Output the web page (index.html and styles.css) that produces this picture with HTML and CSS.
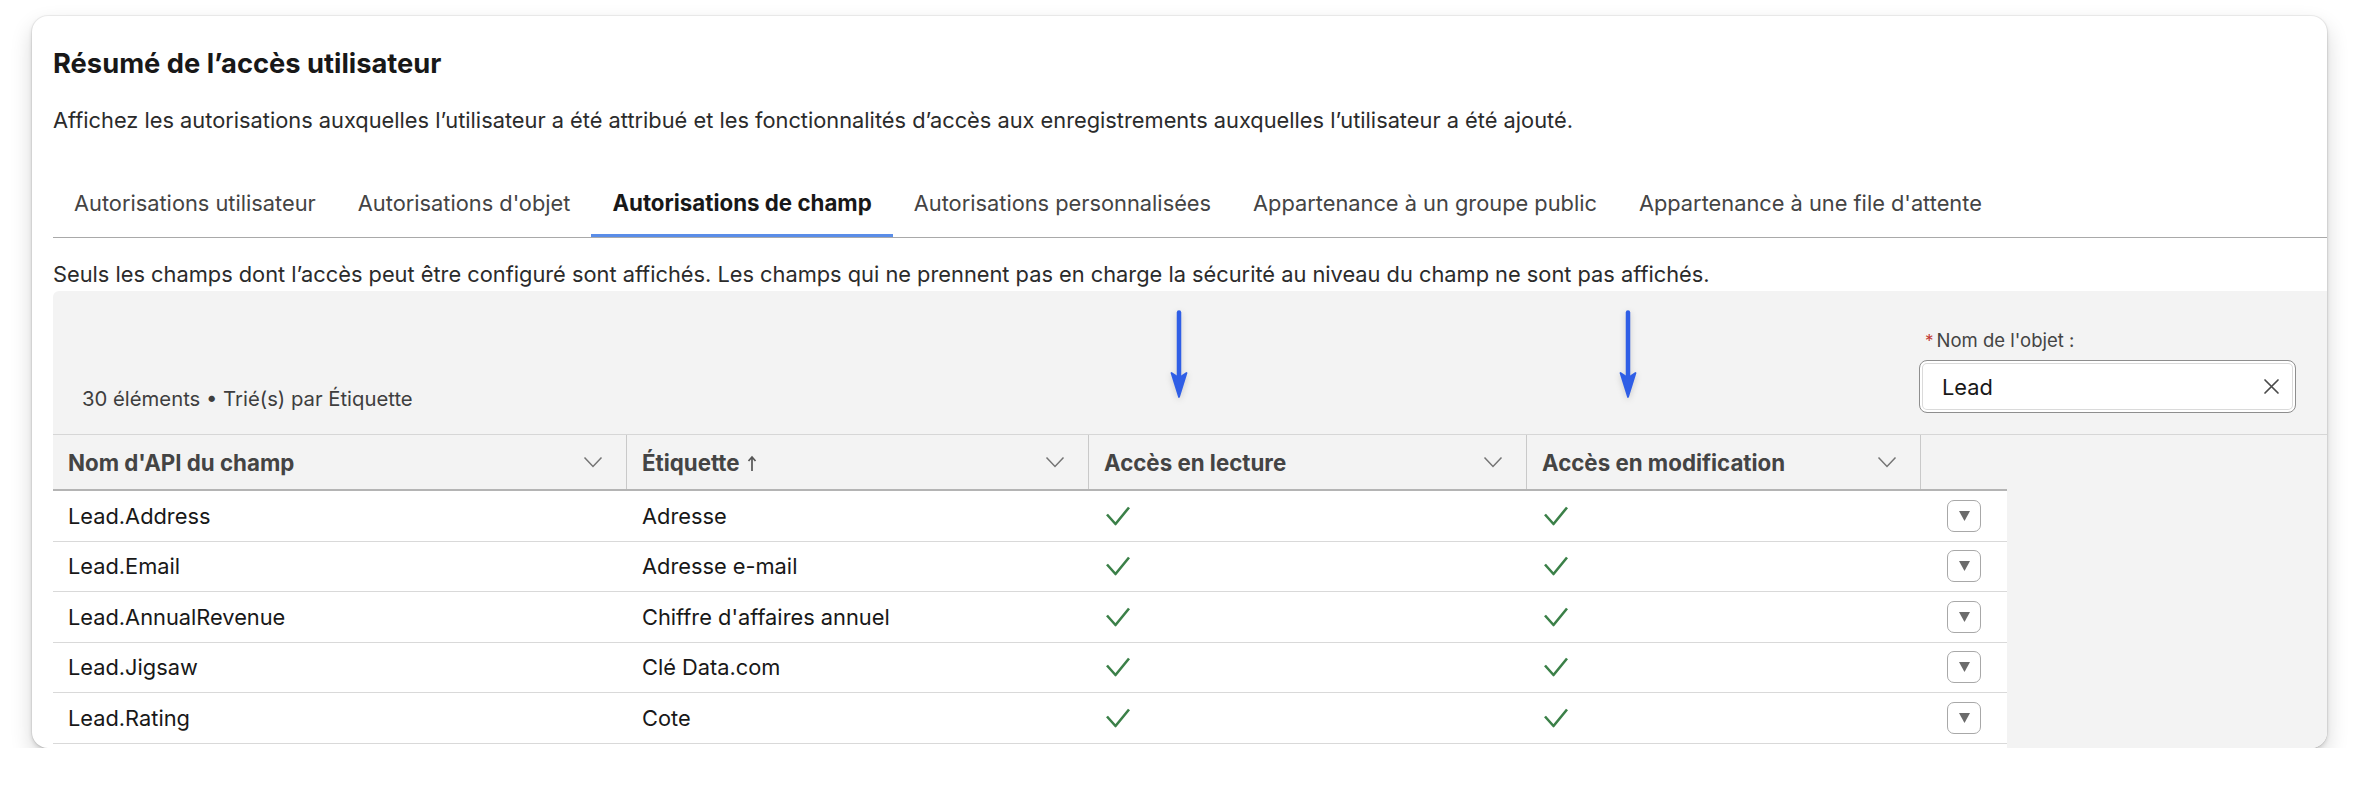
FILE: index.html
```html
<!DOCTYPE html>
<html lang="fr">
<head>
<meta charset="utf-8">
<title>Résumé de l’accès utilisateur</title>
<link rel="stylesheet" href="styles.css">
</head>
<body>
<section class="card">
  <h1 class="title">Résumé de l’accès utilisateur</h1>
  <p class="desc">Affichez les autorisations auxquelles l’utilisateur a été attribué et les fonctionnalités d’accès aux enregistrements auxquelles l’utilisateur a été ajouté.</p>
  <nav class="tabs">
    <a class="tab">Autorisations utilisateur</a>
    <a class="tab">Autorisations d'objet</a>
    <a class="tab active">Autorisations de champ</a>
    <a class="tab">Autorisations personnalisées</a>
    <a class="tab">Appartenance à un groupe public</a>
    <a class="tab">Appartenance à une file d'attente</a>
  </nav>
  <p class="note">Seuls les champs dont l’accès peut être configuré sont affichés. Les champs qui ne prennent pas en charge la sécurité au niveau du champ ne sont pas affichés.</p>

  <div class="datatable">
    <div class="toolbar">
      <div class="count">30 éléments • Trié(s) par Étiquette</div>
      <div class="field">
        <label class="field-label"><abbr class="req">*</abbr>Nom de l'objet :</label>
        <div class="input">
          <span class="input-value">Lead</span>
          <svg class="clear" width="17" height="17" viewBox="0 0 17 17"><path d="M2 2 L15 15 M15 2 L2 15" stroke="#4a4a4a" stroke-width="1.7" stroke-linecap="round"/></svg>
        </div>
      </div>
    </div>

    <div class="thead">
      <div class="grid hrow">
        <div class="th"><span>Nom d'API du champ</span><svg class="chev" width="20" height="12" viewBox="0 0 20 12"><polyline points="1.5,1.5 10,10.5 18.5,1.5" fill="none" stroke="#747474" stroke-width="1.5"/></svg></div>
        <div class="th"><span>Étiquette<svg class="sort" width="10" height="17" viewBox="0 0 10 17"><path d="M5 16 V2.5 M1.5 6 L5 2 L8.5 6" fill="none" stroke="#555" stroke-width="1.7"/></svg></span><svg class="chev" width="20" height="12" viewBox="0 0 20 12"><polyline points="1.5,1.5 10,10.5 18.5,1.5" fill="none" stroke="#747474" stroke-width="1.5"/></svg></div>
        <div class="th"><span>Accès en lecture</span><svg class="chev" width="20" height="12" viewBox="0 0 20 12"><polyline points="1.5,1.5 10,10.5 18.5,1.5" fill="none" stroke="#747474" stroke-width="1.5"/></svg></div>
        <div class="th"><span>Accès en modification</span><svg class="chev" width="20" height="12" viewBox="0 0 20 12"><polyline points="1.5,1.5 10,10.5 18.5,1.5" fill="none" stroke="#747474" stroke-width="1.5"/></svg></div>
        <div class="th th-last"></div>
      </div>
    </div>

    <div class="tbody">
      <div class="grid row">
        <div class="td">Lead.Address</div><div class="td">Adresse</div>
        <div class="td check"><svg width="26" height="20" viewBox="0 0 26 20"><path d="M2 8.5 L10.5 18 L24 1.5" fill="none" stroke="#3b8048" stroke-width="2.6" stroke-linejoin="round"/></svg></div>
        <div class="td check"><svg width="26" height="20" viewBox="0 0 26 20"><path d="M2 8.5 L10.5 18 L24 1.5" fill="none" stroke="#3b8048" stroke-width="2.6" stroke-linejoin="round"/></svg></div>
        <div class="td act"><button class="menu"><svg width="11" height="10" viewBox="0 0 11 10"><polygon points="0,0 11,0 5.5,10" fill="#6b6b6b"/></svg></button></div>
      </div>
      <div class="grid row">
        <div class="td">Lead.Email</div><div class="td">Adresse e-mail</div>
        <div class="td check"><svg width="26" height="20" viewBox="0 0 26 20"><path d="M2 8.5 L10.5 18 L24 1.5" fill="none" stroke="#3b8048" stroke-width="2.6" stroke-linejoin="round"/></svg></div>
        <div class="td check"><svg width="26" height="20" viewBox="0 0 26 20"><path d="M2 8.5 L10.5 18 L24 1.5" fill="none" stroke="#3b8048" stroke-width="2.6" stroke-linejoin="round"/></svg></div>
        <div class="td act"><button class="menu"><svg width="11" height="10" viewBox="0 0 11 10"><polygon points="0,0 11,0 5.5,10" fill="#6b6b6b"/></svg></button></div>
      </div>
      <div class="grid row">
        <div class="td">Lead.AnnualRevenue</div><div class="td">Chiffre d'affaires annuel</div>
        <div class="td check"><svg width="26" height="20" viewBox="0 0 26 20"><path d="M2 8.5 L10.5 18 L24 1.5" fill="none" stroke="#3b8048" stroke-width="2.6" stroke-linejoin="round"/></svg></div>
        <div class="td check"><svg width="26" height="20" viewBox="0 0 26 20"><path d="M2 8.5 L10.5 18 L24 1.5" fill="none" stroke="#3b8048" stroke-width="2.6" stroke-linejoin="round"/></svg></div>
        <div class="td act"><button class="menu"><svg width="11" height="10" viewBox="0 0 11 10"><polygon points="0,0 11,0 5.5,10" fill="#6b6b6b"/></svg></button></div>
      </div>
      <div class="grid row">
        <div class="td">Lead.Jigsaw</div><div class="td">Clé Data.com</div>
        <div class="td check"><svg width="26" height="20" viewBox="0 0 26 20"><path d="M2 8.5 L10.5 18 L24 1.5" fill="none" stroke="#3b8048" stroke-width="2.6" stroke-linejoin="round"/></svg></div>
        <div class="td check"><svg width="26" height="20" viewBox="0 0 26 20"><path d="M2 8.5 L10.5 18 L24 1.5" fill="none" stroke="#3b8048" stroke-width="2.6" stroke-linejoin="round"/></svg></div>
        <div class="td act"><button class="menu"><svg width="11" height="10" viewBox="0 0 11 10"><polygon points="0,0 11,0 5.5,10" fill="#6b6b6b"/></svg></button></div>
      </div>
      <div class="grid row">
        <div class="td">Lead.Rating</div><div class="td">Cote</div>
        <div class="td check"><svg width="26" height="20" viewBox="0 0 26 20"><path d="M2 8.5 L10.5 18 L24 1.5" fill="none" stroke="#3b8048" stroke-width="2.6" stroke-linejoin="round"/></svg></div>
        <div class="td check"><svg width="26" height="20" viewBox="0 0 26 20"><path d="M2 8.5 L10.5 18 L24 1.5" fill="none" stroke="#3b8048" stroke-width="2.6" stroke-linejoin="round"/></svg></div>
        <div class="td act"><button class="menu"><svg width="11" height="10" viewBox="0 0 11 10"><polygon points="0,0 11,0 5.5,10" fill="#6b6b6b"/></svg></button></div>
      </div>
    </div>

    <svg class="arrow arrow-read" width="20" height="90" viewBox="0 0 20 90"><path d="M10 2.5 V74" stroke="#2f5ee6" stroke-width="4.5" stroke-linecap="round"/><path d="M2.5 63 L10 87 L17.5 63 L10 68 Z" fill="#2f5ee6" stroke="#2f5ee6" stroke-width="1.8" stroke-linejoin="round"/></svg>
    <svg class="arrow arrow-edit" width="20" height="90" viewBox="0 0 20 90"><path d="M10 2.5 V74" stroke="#2f5ee6" stroke-width="4.5" stroke-linecap="round"/><path d="M2.5 63 L10 87 L17.5 63 L10 68 Z" fill="#2f5ee6" stroke="#2f5ee6" stroke-width="1.8" stroke-linejoin="round"/></svg>
  </div>
</section>
</body>
</html>
```
FILE: styles.css
```css
* { box-sizing: border-box; }

body {
  margin: 0;
  background: #ffffff;
  font-family: "Inter", "Noto Sans", sans-serif;
  color: #181818;
}

.card {
  margin: 16px 0 0 32px;
  width: 2295px;
  height: 732px;
  padding: 31px 0 0 21px;
  background: #ffffff;
  border-radius: 16px;
  overflow: hidden;
  box-shadow: 0 10px 22px rgba(0, 0, 0, 0.16), 0 2px 4px rgba(0, 0, 0, 0.14), 0 0 0 1px rgba(0, 0, 0, 0.05);
}

.title {
  margin: 0;
  font-size: 27.3px;
  line-height: 34px;
  font-weight: 700;
  color: #181818;
}

.desc {
  margin: 25px 0 0;
  font-size: 21.8px;
  line-height: 28px;
  color: #2b2b2b;
}

.tabs {
  display: flex;
  margin-top: 41px;
  border-bottom: 1px solid #a9a9a9;
}

.tab {
  padding: 14px 21px 20px;
  font-size: 21.8px;
  line-height: 28px;
  color: #444444;
  white-space: nowrap;
}

.tab.active {
  font-weight: 700;
  font-size: 22.3px;
  color: #181818;
  box-shadow: inset 0 -3px 0 #5a8de8;
}

.note {
  margin: 22px 0 0;
  font-size: 21.8px;
  line-height: 28px;
  color: #2b2b2b;
}

.datatable {
  position: relative;
  margin-top: 3px;
  background: #f3f3f3;
  border-top-left-radius: 6px;
  min-height: 600px;
}

.toolbar {
  height: 143px;
  display: flex;
  justify-content: space-between;
  align-items: flex-end;
  padding: 0 31px 21px 29px;
}

.count {
  font-size: 20.3px;
  line-height: 26px;
  color: #3e3e3e;
  margin-bottom: 1px;
}

.field {
  width: 377px;
  display: flex;
  flex-direction: column;
}

.field-label {
  font-size: 18.5px;
  line-height: 24px;
  color: #444444;
  margin: 0 0 7px 6px;
}

.req {
  color: #c23934;
  text-decoration: none;
  margin-right: 3px;
  font-size: 17px;
}

.input {
  height: 53px;
  display: flex;
  align-items: center;
  justify-content: space-between;
  padding: 0 15px 0 22px;
  background: #ffffff;
  border: 1px solid #8e8e8e;
  border-radius: 8px;
  box-shadow: inset 0 0 0 2px #ffffff, inset 0 0 0 3px #dadada;
}

.input-value {
  font-size: 21.8px;
  color: #181818;
}

.clear { display: block; }

.thead {
  border-top: 1px solid #d6d6d6;
}

.grid {
  display: grid;
  grid-template-columns: 574px 462px 438px 394px 86px;
  width: 1954px;
}

.hrow {
  border-bottom: 2px solid #b4b4b4;
}

.th {
  height: 54px;
  display: flex;
  align-items: center;
  justify-content: space-between;
  padding: 0 23px 0 15px;
  font-size: 22.3px;
  font-weight: 700;
  color: #444444;
  border-right: 1px solid #c9c9c9;
}

.th-last { border-right: none; }

.sort {
  margin-left: 7px;
  vertical-align: -1px;
}

.chev { flex: none; }

.tbody {
  width: 1954px;
  background: #ffffff;
  padding-bottom: 20px;
}

.row {
  height: 50.5px;
  border-bottom: 1px solid #d9d9d9;
}

.td {
  display: flex;
  align-items: center;
  padding-left: 15px;
  font-size: 21.8px;
  color: #181818;
}

.td.check { padding-left: 16px; }

.td.act {
  justify-content: center;
  padding-left: 0;
}

.menu {
  width: 34px;
  height: 32px;
  display: flex;
  align-items: center;
  justify-content: center;
  padding: 0;
  background: #ffffff;
  border: 1px solid #a8a8a8;
  border-radius: 7px;
}

.arrow {
  position: absolute;
  top: 19px;
  filter: drop-shadow(0 2px 3px rgba(0, 0, 0, 0.16));
}

.arrow-read { left: 1116px; }
.arrow-edit { left: 1565px; }
```
